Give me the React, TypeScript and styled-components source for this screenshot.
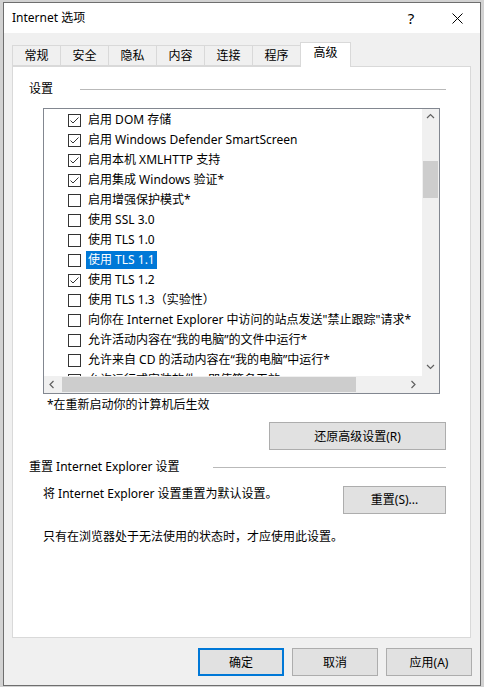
import styled, { createGlobalStyle } from 'styled-components';

const GlobalStyle = createGlobalStyle`
  html, body {
    margin: 0;
    padding: 0;
    background: #d2d2d2;
  }
  body {
    font-family: 'Noto Sans', 'Noto Sans CJK SC', sans-serif;
    font-size: 12px;
    color: #000;
  }
`;

const TABS = ['常规', '安全', '隐私', '内容', '连接', '程序', '高级'];

type Option = { label: string; checked: boolean; selected?: boolean };

const OPTIONS: Option[] = [
  { label: '启用 DOM 存储', checked: true },
  { label: '启用 Windows Defender SmartScreen', checked: true },
  { label: '启用本机 XMLHTTP 支持', checked: true },
  { label: '启用集成 Windows 验证*', checked: true },
  { label: '启用增强保护模式*', checked: false },
  { label: '使用 SSL 3.0', checked: false },
  { label: '使用 TLS 1.0', checked: false },
  { label: '使用 TLS 1.1', checked: false, selected: true },
  { label: '使用 TLS 1.2', checked: true },
  { label: '使用 TLS 1.3（实验性）', checked: false },
  { label: '向你在 Internet Explorer 中访问的站点发送"禁止跟踪"请求*', checked: false },
  { label: '允许活动内容在“我的电脑”的文件中运行*', checked: false },
  { label: '允许来自 CD 的活动内容在“我的电脑”中运行*', checked: false },
  { label: '允许运行或安装软件，即使签名无效', checked: false },
];

const Chevron = ({ dir }: { dir: 'up' | 'down' | 'left' | 'right' }) => {
  const points = {
    up: '1,5 4.5,1.5 8,5',
    down: '1,2 4.5,5.5 8,2',
    left: '5.5,1 2,4.5 5.5,8',
    right: '2.5,1 6,4.5 2.5,8',
  }[dir];
  return (
    <svg width="9" height="9" viewBox="0 0 9 9">
      <polyline points={points} fill="none" stroke="#606060" strokeWidth="1.2" />
    </svg>
  );
};

const App = () => {
  return (
    <>
      <GlobalStyle />
      <Window>
        <TitleBar>
          <Title>Internet 选项</Title>
          <TitleButton>?</TitleButton>
          <TitleButton>
            <svg width="11" height="11" viewBox="0 0 11 11">
              <path d="M0.5 0.5 L10.5 10.5 M10.5 0.5 L0.5 10.5" stroke="#000" strokeWidth="1" />
            </svg>
          </TitleButton>
        </TitleBar>
        <Body>
          <TabRow>
            {TABS.map(tab => (
              <Tab key={tab} $active={tab === '高级'}>{tab}</Tab>
            ))}
          </TabRow>
          <Panel>
            <GroupHeader $gap={27}>
              <span>设置</span>
              <GroupLine />
            </GroupHeader>
            <ListBox>
              <ListArea>
                {OPTIONS.map(opt => (
                  <OptionRow key={opt.label}>
                    <CheckBox>
                      {opt.checked && (
                        <svg width="11" height="11" viewBox="0 0 11 11">
                          <polyline points="1.5,5.5 4,8 9.5,2.5" fill="none" stroke="#333" strokeWidth="1" />
                        </svg>
                      )}
                    </CheckBox>
                    <OptionLabel $selected={opt.selected}>{opt.label}</OptionLabel>
                  </OptionRow>
                ))}
              </ListArea>
              <VScroll>
                <ArrowCell><Chevron dir="up" /></ArrowCell>
                <VTrack>
                  <VThumb />
                </VTrack>
                <ArrowCell><Chevron dir="down" /></ArrowCell>
              </VScroll>
              <HScroll>
                <ArrowCell><Chevron dir="left" /></ArrowCell>
                <HTrack>
                  <HThumb />
                </HTrack>
                <ArrowCell><Chevron dir="right" /></ArrowCell>
              </HScroll>
              <Corner />
            </ListBox>
            <Note>*在重新启动你的计算机后生效</Note>
            <RightAligned>
              <Button $width={177}>还原高级设置(R)</Button>
            </RightAligned>
            <GroupHeader $gap={33} $top={9}>
              <span>重置 Internet Explorer 设置</span>
              <GroupLine />
            </GroupHeader>
            <ResetRow>
              <span>将 Internet Explorer 设置重置为默认设置。</span>
              <Button $width={103}>重置(S)...</Button>
            </ResetRow>
            <Hint>只有在浏览器处于无法使用的状态时，才应使用此设置。</Hint>
          </Panel>
          <Footer>
            <Button $width={86} $focused>确定</Button>
            <Button $width={86}>取消</Button>
            <Button $width={86}>应用(A)</Button>
          </Footer>
        </Body>
      </Window>
    </>
  );
};

export default App;

const Window = styled.div`
  box-sizing: border-box;
  margin: 2px 0 0 3px;
  width: 478px;
  height: 684px;
  border: 1px solid #6e6e6e;
  display: flex;
  flex-direction: column;
  background: #f0f0f0;
`;

const TitleBar = styled.div`
  height: 30px;
  flex-shrink: 0;
  background: #fff;
  display: flex;
  align-items: center;
  padding-left: 8px;
`;

const Title = styled.div`
  flex: 1;
  line-height: 16px;
`;

const TitleButton = styled.div`
  width: 46px;
  height: 30px;
  display: flex;
  align-items: center;
  justify-content: center;
  font-size: 15px;
`;

const Body = styled.div`
  flex: 1;
  display: flex;
  flex-direction: column;
  padding: 9px 8px 0 8px;
`;

const TabRow = styled.div`
  display: flex;
  align-items: flex-end;
  height: 24px;
  position: relative;
  z-index: 1;
`;

const Tab = styled.div<{ $active?: boolean }>`
  box-sizing: border-box;
  width: ${p => (p.$active ? '51px' : '49px')};
  height: ${p => (p.$active ? '25px' : '21px')};
  margin-right: -1px;
  margin-bottom: ${p => (p.$active ? '-1px' : '0')};
  border: 1px solid #d9d9d9;
  border-bottom: ${p => (p.$active ? 'none' : '1px solid #d9d9d9')};
  background: ${p => (p.$active ? '#fff' : '#f0f0f0')};
  display: flex;
  align-items: center;
  justify-content: center;
  padding-bottom: ${p => (p.$active ? '4px' : '0')};
  line-height: 16px;
`;

const Panel = styled.div`
  box-sizing: border-box;
  width: 459px;
  height: 572px;
  background: #fff;
  border: 1px solid #d9d9d9;
  padding: 14px 24px 0 16px;
  display: flex;
  flex-direction: column;
`;

const GroupHeader = styled.div<{ $gap: number; $top?: number }>`
  display: flex;
  align-items: center;
  gap: ${p => p.$gap}px;
  line-height: 16px;
  margin-top: ${p => p.$top ?? 0}px;
`;

const GroupLine = styled.div`
  flex: 1;
  height: 1px;
  background: #b9b9b9;
`;

const ListBox = styled.div`
  box-sizing: border-box;
  width: 397px;
  height: 286px;
  margin: 11px 0 0 14px;
  border: 1px solid #828790;
  display: grid;
  grid-template-columns: 1fr 17px;
  grid-template-rows: 1fr 17px;
  overflow: hidden;
`;

const ListArea = styled.div`
  padding-top: 1px;
  overflow: hidden;
  white-space: nowrap;
`;

const OptionRow = styled.div`
  height: 20px;
  display: flex;
  align-items: center;
  padding-left: 24px;
`;

const CheckBox = styled.div`
  box-sizing: border-box;
  width: 13px;
  height: 13px;
  border: 1px solid #333;
  background: #fff;
  flex-shrink: 0;
  display: flex;
  align-items: center;
  justify-content: center;
`;

const OptionLabel = styled.span<{ $selected?: boolean }>`
  margin-left: 5px;
  padding: 0 2px;
  line-height: 18px;
  background: ${p => (p.$selected ? '#0078d7' : 'transparent')};
  color: ${p => (p.$selected ? '#fff' : '#000')};
`;

const VScroll = styled.div`
  background: #f0f0f0;
  display: flex;
  flex-direction: column;
`;

const HScroll = styled.div`
  background: #f0f0f0;
  display: flex;
`;

const ArrowCell = styled.div`
  width: 17px;
  height: 17px;
  flex-shrink: 0;
  display: flex;
  align-items: center;
  justify-content: center;
`;

const VTrack = styled.div`
  flex: 1;
  padding: 35px 1px 0;
`;

const VThumb = styled.div`
  height: 37px;
  background: #cdcdcd;
`;

const HTrack = styled.div`
  flex: 1;
  padding: 1px 49px 1px 1px;
  display: flex;
`;

const HThumb = styled.div`
  flex: 1;
  background: #cdcdcd;
`;

const Corner = styled.div`
  background: #f0f0f0;
`;

const Note = styled.div`
  line-height: 16px;
  margin: 3px 0 0 18px;
`;

const RightAligned = styled.div`
  display: flex;
  justify-content: flex-end;
  margin-top: 9px;
`;

const Button = styled.div<{ $width: number; $focused?: boolean }>`
  box-sizing: border-box;
  width: ${p => p.$width}px;
  height: 28px;
  background: #e1e1e1;
  border: ${p => (p.$focused ? '2px solid #0078d7' : '1px solid #adadad')};
  display: flex;
  align-items: center;
  justify-content: center;
  flex-shrink: 0;
`;

const ResetRow = styled.div`
  display: flex;
  justify-content: space-between;
  align-items: flex-start;
  margin: 11px 0 0 14px;
  line-height: 16px;
`;

const Hint = styled.div`
  line-height: 16px;
  margin: 15px 0 0 14px;
`;

const Footer = styled.div`
  display: flex;
  justify-content: flex-end;
  gap: 8px;
  margin-top: 10px;
`;
